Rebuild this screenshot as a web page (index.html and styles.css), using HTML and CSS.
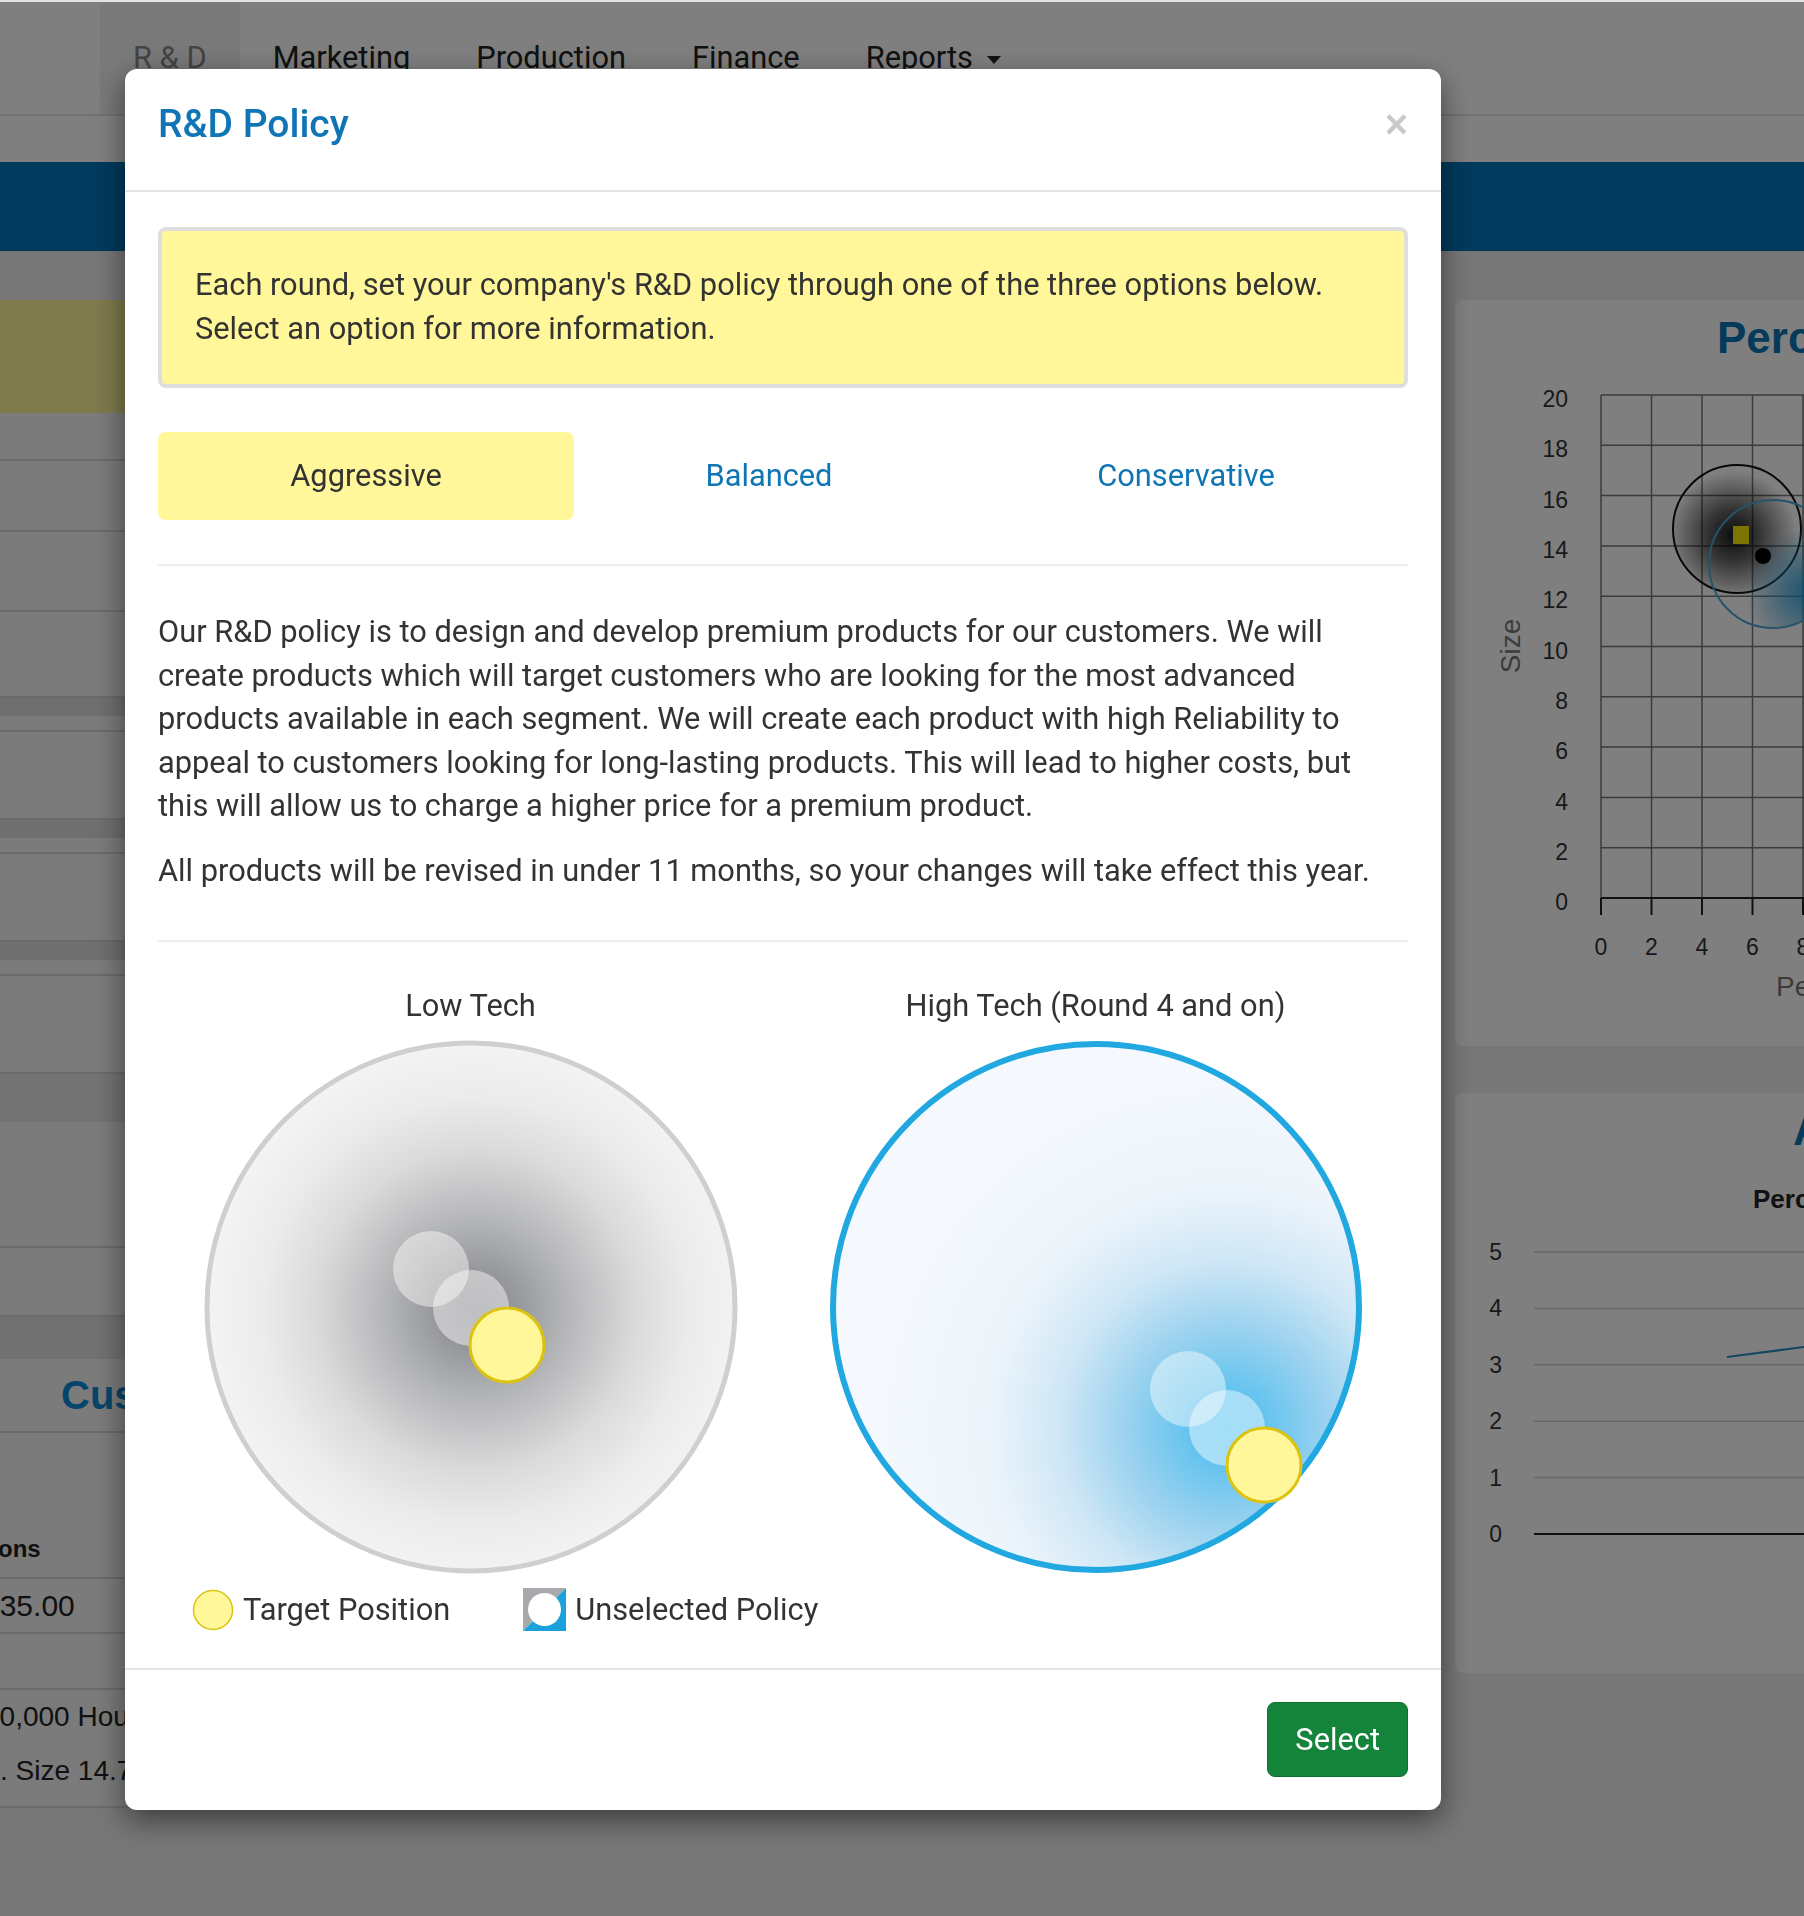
FILE: index.html
```html
<!DOCTYPE html>
<html lang="en">
<head>
    <meta charset="UTF-8">
    <meta name="viewport" content="width=device-width, initial-scale=1.0">
    <title>R&amp;D Policy</title>
    <link rel="stylesheet" href="styles.css">
</head>
<body>

<div class="page">
    <div class="topnav">
        <ul class="tabs">
            <li class="active">R &amp; D</li>
            <li>Marketing</li>
            <li>Production</li>
            <li>Finance</li>
            <li>Reports <span class="caret"></span></li>
        </ul>
    </div>
    <div class="subnav"></div>
    <div class="banner"></div>

    <div class="content">
        <div class="left-col">
            <div class="lrow olive"></div>
            <div class="lrow h48"></div>
            <div class="lrow h71"></div>
            <div class="lrow h80"></div>
            <div class="lrow h86"></div>
            <div class="band"></div>
            <div class="lrow h16"></div>
            <div class="lrow h88"></div>
            <div class="band"></div>
            <div class="lrow h16"></div>
            <div class="lrow h88"></div>
            <div class="band"></div>
            <div class="lrow h16"></div>
            <div class="lrow h98"></div>
            <div class="band tall"></div>
            <div class="lrow h126"></div>
            <div class="lrow h69"></div>
            <div class="band wide"></div>
            <div class="lrow h74 survey-title">Customer Survey</div>
            <div class="lrow h146 spec-title"><span>Specifications</span></div>
            <div class="lrow h55 spec-value"><span>$35.00</span></div>
            <div class="lrow h56"></div>
            <div class="lrow h118 spec-info">
                <div class="hours">10,000 Hours</div>
                <div class="size">Pfmn 6.3. Size 14.7</div>
            </div>
        </div>

        <div class="right-col">
            <div class="panel map-panel">
                <h3>Perceptual Map</h3>
                <svg class="chart" width="856" height="680" viewBox="0 0 856 680">
                    <defs>
                        <radialGradient id="mapDark" cx="0.47" cy="0.55" r="0.5">
                            <stop offset="0" stop-color="#000" stop-opacity="0.9"/>
                            <stop offset="0.4" stop-color="#000" stop-opacity="0.6"/>
                            <stop offset="1" stop-color="#000" stop-opacity="0"/>
                        </radialGradient>
                        <radialGradient id="mapBlue" cx="0.78" cy="0.72" r="0.5">
                            <stop offset="0" stop-color="#1a9ad6" stop-opacity="0.9"/>
                            <stop offset="1" stop-color="#1a9ad6" stop-opacity="0"/>
                        </radialGradient>
                    </defs>
                    <path class="grid" d="M146 29H651M146 79.3H651M146 129.6H651M146 179.9H651M146 230.2H651M146 280.5H651M146 330.8H651M146 381.1H651M146 431.4H651M146 481.7H651
                        M146 29V532M196.5 29V532M247 29V532M297.5 29V532M348 29V532M398.5 29V532M449 29V532M499.5 29V532M550 29V532M600.5 29V532M651 29V532"/>
                    <path class="axis" d="M146 532H651M146 532V549M196.5 532V549M247 532V549M297.5 532V549M348 532V549M398.5 532V549M449 532V549M499.5 532V549M550 532V549M600.5 532V549M651 532V549"/>
                    <g class="tick-label" text-anchor="end">
                        <text x="113" y="41">20</text>
                        <text x="113" y="91">18</text>
                        <text x="113" y="142">16</text>
                        <text x="113" y="192">14</text>
                        <text x="113" y="242">12</text>
                        <text x="113" y="293">10</text>
                        <text x="113" y="343">8</text>
                        <text x="113" y="393">6</text>
                        <text x="113" y="444">4</text>
                        <text x="113" y="494">2</text>
                        <text x="113" y="544">0</text>
                    </g>
                    <g class="tick-label" text-anchor="middle">
                        <text x="146" y="589">0</text>
                        <text x="196.5" y="589">2</text>
                        <text x="247" y="589">4</text>
                        <text x="297.5" y="589">6</text>
                        <text x="348" y="589">8</text>
                        <text x="398.5" y="589">10</text>
                        <text x="449" y="589">12</text>
                        <text x="499.5" y="589">14</text>
                        <text x="550" y="589">16</text>
                        <text x="600.5" y="589">18</text>
                        <text x="651" y="589">20</text>
                    </g>
                    <text class="axis-title" transform="translate(65,280) rotate(-90)" text-anchor="middle">Size</text>
                    <text class="axis-title" x="321" y="630">Performance</text>
                    <circle cx="282" cy="163" r="64" fill="url(#mapDark)" stroke="#111" stroke-width="2"/>
                    <circle cx="318" cy="198" r="64" fill="url(#mapBlue)" stroke="#4aa6d6" stroke-width="2"/>
                    <rect x="278" y="160" width="16" height="18" fill="#f8e800"/>
                    <circle cx="308" cy="190" r="8" fill="#000"/>
                </svg>
            </div>

            <div class="panel trend-panel">
                <h3>Awareness</h3>
                <h4>Percent of Customers</h4>
                <svg class="chart" width="856" height="456" viewBox="0 0 856 456">
                    <path class="soft-grid" d="M79 35H856M79 91.4H856M79 147.8H856M79 204.2H856M79 260.6H856"/>
                    <path class="axis" d="M79 317H856"/>
                    <g class="tick-label" text-anchor="end">
                        <text x="47" y="43">5</text>
                        <text x="47" y="99">4</text>
                        <text x="47" y="156">3</text>
                        <text x="47" y="212">2</text>
                        <text x="47" y="269">1</text>
                        <text x="47" y="325">0</text>
                    </g>
                    <path class="trend" d="M272 140L349 130L520 108"/>
                </svg>
            </div>
        </div>
    </div>
</div>

<div class="backdrop"></div>
<div class="top-strip"></div>

<div class="modal">
    <div class="modal-header">
        <h2 class="modal-title">R&amp;D Policy</h2>
        <span class="close">&times;</span>
    </div>

    <div class="modal-body">
        <div class="alert">Each round, set your company's R&amp;D policy through one of the three options below. Select an option for more information.</div>

        <div class="policy-tabs">
            <div class="policy-tab active">Aggressive</div>
            <div class="policy-tab">Balanced</div>
            <div class="policy-tab">Conservative</div>
        </div>

        <hr class="divider">

        <p>Our R&amp;D policy is to design and develop premium products for our customers. We will create products which will target customers who are looking for the most advanced products available in each segment. We will create each product with high Reliability to appeal to customers looking for long-lasting products. This will lead to higher costs, but this will allow us to charge a higher price for a premium product.</p>
        <p>All products will be revised in under 11 months, so your changes will take effect this year.</p>

        <hr class="divider divider-low">

        <div class="maps">
            <div class="map">
                <div class="map-label">Low Tech</div>
                <svg width="534" height="534" viewBox="0 0 534 534">
                    <defs>
                        <radialGradient id="lowGlow" gradientUnits="userSpaceOnUse" cx="272" cy="270" r="266">
                            <stop offset="0" stop-color="#8a8b8f"/>
                            <stop offset="0.15" stop-color="#96979a"/>
                            <stop offset="0.35" stop-color="#b6b7b9"/>
                            <stop offset="0.6" stop-color="#dadadb"/>
                            <stop offset="0.8" stop-color="#ebebeb"/>
                            <stop offset="1" stop-color="#f3f3f3"/>
                        </radialGradient>
                    </defs>
                    <circle cx="267" cy="267" r="264" fill="url(#lowGlow)" stroke="#cfcfcf" stroke-width="5"/>
                    <circle class="ghost" cx="227" cy="229" r="38"/>
                    <circle class="ghost" cx="267" cy="268" r="38"/>
                    <circle class="target" cx="303" cy="305" r="37"/>
                </svg>
            </div>
            <div class="map">
                <div class="map-label">High Tech (Round 4 and on)</div>
                <svg width="534" height="534" viewBox="0 0 534 534">
                    <defs>
                        <radialGradient id="highGlow" gradientUnits="userSpaceOnUse" cx="398" cy="388" r="360">
                            <stop offset="0" stop-color="#57c4f1"/>
                            <stop offset="0.1" stop-color="#62c3ef"/>
                            <stop offset="0.27" stop-color="#98d1ef"/>
                            <stop offset="0.47" stop-color="#d0e7f6"/>
                            <stop offset="0.67" stop-color="#ecf4fb"/>
                            <stop offset="1" stop-color="#f5f9fd"/>
                        </radialGradient>
                    </defs>
                    <circle cx="267" cy="267" r="263" fill="url(#highGlow)" stroke="#22a8e0" stroke-width="6"/>
                    <circle class="ghost" cx="359" cy="349" r="38"/>
                    <circle class="ghost" cx="398" cy="388" r="38"/>
                    <circle class="target" cx="435" cy="425" r="37"/>
                </svg>
            </div>
        </div>

        <div class="legend">
            <div class="legend-item">
                <svg width="42" height="42" viewBox="0 0 42 42">
                    <circle cx="21" cy="21" r="19.5" fill="#fff799" stroke="#dcc312" stroke-width="1.5"/>
                </svg>
                <span>Target Position</span>
            </div>
            <div class="legend-item">
                <svg width="43" height="43" viewBox="0 0 43 43">
                    <polygon points="0,0 43,0 0,43" fill="#a7a9ac"/>
                    <polygon points="43,0 43,43 0,43" fill="#1ba1dc"/>
                    <circle cx="21.5" cy="21.5" r="16.5" fill="#fff"/>
                </svg>
                <span>Unselected Policy</span>
            </div>
        </div>
    </div>

    <div class="modal-footer">
        <button type="button" class="btn-select">Select</button>
    </div>
</div>

</body>
</html>
```

FILE: styles.css
```css
html, body {
    margin: 0;
    overflow: hidden;
}
body {
    width: 1804px;
    height: 1916px;
    background: #eeeeee;
    font-family: Roboto, "Liberation Sans", sans-serif;
    color: #333;
}

/* page behind the dialog */
.topnav {
    height: 114px;
    background: #fff;
    border-bottom: 2px solid #e3e3e3;
}
.tabs {
    list-style: none;
    margin: 0 0 0 100px;
    padding: 0;
    display: flex;
    height: 100%;
}
.tabs li {
    padding: 36px 33px 0;
    font-size: 30.8px;
    line-height: 43.5px;
    color: #222;
}
.tabs li.active {
    margin-top: 3px;
    padding-top: 33px;
    background: #f2f2f2;
    color: #888;
}
.caret {
    display: inline-block;
    vertical-align: middle;
    margin-left: 6px;
    border-top: 8px solid #222;
    border-left: 7px solid transparent;
    border-right: 7px solid transparent;
}
.subnav {
    height: 46px;
    background: #fff;
}
.banner {
    height: 89px;
    background: #0074b8;
}
.content {
    display: grid;
    grid-template-columns: 1440px 856px;
    column-gap: 15px;
    padding-top: 49px;
}

.lrow {
    box-sizing: border-box;
    background: #f7f7f7;
    border-bottom: 2px solid #d6d6d6;
    font-family: "Liberation Sans", Arial, sans-serif;
    color: #222;
    white-space: nowrap;
}
.lrow.olive {
    height: 113px;
    background: #fff599;
    border-bottom: 0;
}
.h16 { height: 16px; }
.h48 { height: 48px; }
.h55 { height: 55px; }
.h56 { height: 56px; }
.h69 { height: 69px; }
.h71 { height: 71px; }
.h74 { height: 74px; }
.h80 { height: 80px; }
.h86 { height: 86px; }
.h88 { height: 88px; }
.h98 { height: 98px; }
.h118 { height: 118px; }
.h126 { height: 126px; }
.h146 { height: 146px; }
.band {
    height: 18px;
    background: #dedede;
}
.band.tall {
    height: 48px;
    background: #e6e6e6;
}
.band.wide {
    height: 42px;
    background: #e3e3e3;
}
.survey-title {
    display: flex;
    align-items: center;
    padding-left: 61px;
    font-size: 40px;
    font-weight: bold;
    color: #0d8ad6;
}
.spec-title {
    display: flex;
    align-items: flex-end;
    padding-bottom: 13px;
    font-size: 24px;
    font-weight: bold;
    line-height: 30px;
}
.spec-title span {
    margin-left: -122px;
}
.spec-value {
    display: flex;
    align-items: center;
    font-size: 30px;
}
.spec-value span {
    margin-left: -17px;
}
.spec-info {
    font-size: 28px;
    line-height: 54px;
}
.spec-info .hours {
    margin-left: -16px;
}
.spec-info .size {
    margin-left: -112px;
}

.panel {
    box-sizing: border-box;
    background: #fff;
    border-radius: 8px;
    font-family: "Liberation Sans", Arial, sans-serif;
    overflow: hidden;
}
.panel h3 {
    margin: 0;
    padding-top: 10px;
    font-size: 44px;
    line-height: 56px;
    color: #0a74b4;
    white-space: nowrap;
}
.map-panel {
    height: 746px;
}
.map-panel h3 {
    padding-left: 262px;
}
.trend-panel {
    height: 580px;
    margin-top: 47px;
}
.trend-panel h3 {
    padding-top: 9px;
    padding-left: 338px;
}
.trend-panel h4 {
    margin: 23px 0 0;
    padding-left: 298px;
    font-size: 26px;
    line-height: 36px;
    color: #222;
    white-space: nowrap;
}
.chart {
    display: block;
}
.grid {
    fill: none;
    stroke: #777;
    stroke-width: 1.5;
}
.soft-grid {
    fill: none;
    stroke: #cfcfcf;
    stroke-width: 1.5;
}
.axis {
    fill: none;
    stroke: #222;
    stroke-width: 2;
}
.trend {
    fill: none;
    stroke: #2b8cc4;
    stroke-width: 2;
}
.tick-label {
    font-size: 23px;
    fill: #333;
}
.axis-title {
    font-size: 28px;
    fill: #777;
}

.backdrop {
    position: fixed;
    top: 0;
    left: 0;
    right: 0;
    bottom: 0;
    background: rgba(0, 0, 0, 0.5);
}
.top-strip {
    position: fixed;
    top: 0;
    left: 0;
    right: 0;
    height: 2px;
    background: #e2e2e2;
}

/* dialog */
.modal {
    position: fixed;
    top: 69px;
    left: 125px;
    width: 1316px;
    background: #fff;
    border-radius: 12px;
    box-shadow: 0 10px 30px rgba(0, 0, 0, 0.5);
}
.modal-header {
    height: 110px;
    padding: 0 33px 11px;
    display: flex;
    align-items: center;
    justify-content: space-between;
    border-bottom: 2px solid #e5e5e5;
}
.modal-title {
    margin: 0;
    font-size: 39px;
    font-weight: 500;
    line-height: 1.1;
    color: #0f75b5;
}
.close {
    font-family: "Liberation Sans", Arial, sans-serif;
    font-size: 40px;
    font-weight: bold;
    line-height: 1;
    color: #c9c9c9;
}
.modal-body {
    padding: 35px 33px 36px;
    font-size: 30.8px;
    line-height: 43.5px;
}
.alert {
    background: #fff799;
    border: 4px solid #dedede;
    border-radius: 8px;
    padding: 32px 33px 34px;
}
.policy-tabs {
    display: grid;
    grid-template-columns: 416px 390px 1fr;
    margin-top: 44px;
}
.policy-tab {
    height: 88px;
    display: flex;
    align-items: center;
    justify-content: center;
    border-radius: 8px;
    color: #0f75b5;
}
.policy-tab.active {
    background: #fff799;
    color: #333;
}
.divider {
    margin: 44px 0;
    border: 0;
    border-top: 2px solid #eeeeee;
}
.divider-low {
    margin-top: 47.5px;
    margin-bottom: 42px;
}
.modal-body p {
    margin: 0 10px 21.5px 0;
}
.maps {
    display: grid;
    grid-template-columns: 1fr 1fr;
}
.map {
    display: flex;
    flex-direction: column;
    align-items: center;
}
.map svg {
    display: block;
    margin-top: 12.5px;
}
.ghost {
    fill: #fff;
    fill-opacity: 0.45;
}
.target {
    fill: #fff799;
    stroke: #dcc312;
    stroke-width: 3;
}
.legend {
    display: flex;
    align-items: center;
    gap: 73px;
    height: 43.5px;
    margin-top: 14px;
    padding-left: 34px;
}
.legend-item {
    display: flex;
    align-items: center;
    gap: 9px;
}
.legend-item svg {
    display: block;
}
.modal-footer {
    display: flex;
    justify-content: flex-end;
    padding: 32px 33px 32.5px;
    border-top: 2px solid #e5e5e5;
}
.btn-select {
    font-family: Roboto, "Liberation Sans", sans-serif;
    font-size: 30.8px;
    line-height: 43.5px;
    padding: 15px 27px;
    border: 1px solid #0d6f2e;
    border-radius: 8px;
    background: #13843a;
    color: #fff;
}
```
